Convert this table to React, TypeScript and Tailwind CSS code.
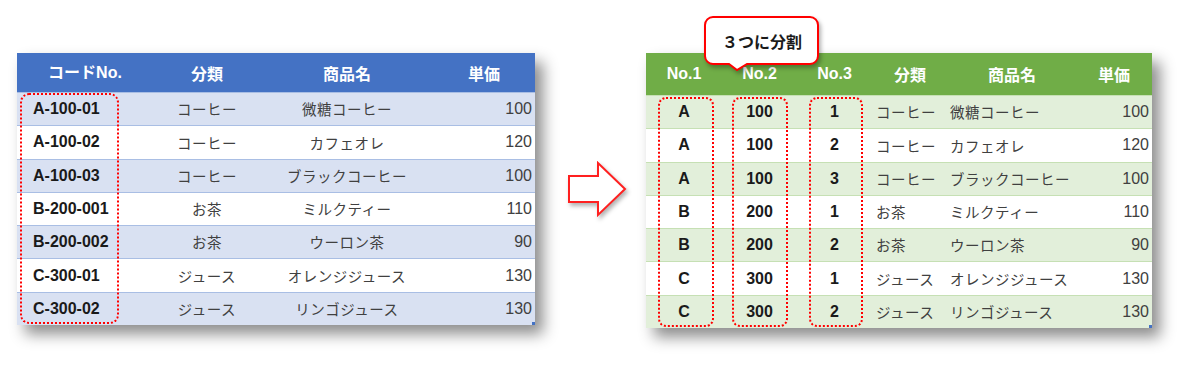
import React from 'react';

type Row = string[];

const leftRows: Row[] = [
  ['A-100-01', 'コーヒー', '微糖コーヒー', '100'],
  ['A-100-02', 'コーヒー', 'カフェオレ', '120'],
  ['A-100-03', 'コーヒー', 'ブラックコーヒー', '100'],
  ['B-200-001', 'お茶', 'ミルクティー', '110'],
  ['B-200-002', 'お茶', 'ウーロン茶', '90'],
  ['C-300-01', 'ジュース', 'オレンジジュース', '130'],
  ['C-300-02', 'ジュース', 'リンゴジュース', '130'],
];

const rightRows: Row[] = [
  ['A', '100', '1', 'コーヒー', '微糖コーヒー', '100'],
  ['A', '100', '2', 'コーヒー', 'カフェオレ', '120'],
  ['A', '100', '3', 'コーヒー', 'ブラックコーヒー', '100'],
  ['B', '200', '1', 'お茶', 'ミルクティー', '110'],
  ['B', '200', '2', 'お茶', 'ウーロン茶', '90'],
  ['C', '300', '1', 'ジュース', 'オレンジジュース', '130'],
  ['C', '300', '2', 'ジュース', 'リンゴジュース', '130'],
];

const font = "font-['Liberation_Sans','Noto_Sans_CJK_JP',sans-serif]";
const jp = "font-['Noto_Sans_CJK_JP',sans-serif]";

function LeftTable() {
  return (
    <div className="relative w-[518px] bg-white shadow-[8px_9px_14px_rgba(0,0,0,0.45)]">
      {/* header */}
      <div className="flex h-[39px] items-center bg-[#4472C4] text-[16px] font-bold text-white">
        <div className={`w-[136px] text-center ${font}`}>コードNo.</div>
        <div className={`w-[108px] text-center ${jp}`}>分類</div>
        <div className={`w-[172px] text-center ${jp}`}>商品名</div>
        <div className={`w-[102px] text-center ${jp}`}>単価</div>
      </div>
      {leftRows.map((r, i) => (
        <div
          key={i}
          className={`flex h-[33.3px] items-center border-t border-[#A9BEE4] ${i % 2 === 0 ? 'bg-[#D9E1F2]' : 'bg-white'}`}
        >
          <div className={`w-[136px] pl-4 text-[16px] font-bold text-[#1a1a1a] ${font}`}>{r[0]}</div>
          <div className={`w-[108px] text-center text-[14.5px] tracking-[0.5px] text-[#404040] ${jp}`}>{r[1]}</div>
          <div className={`w-[172px] text-center text-[14.5px] tracking-[0.5px] text-[#404040] ${jp}`}>{r[2]}</div>
          <div className={`w-[102px] pr-[3px] text-right text-[16px] text-[#404040] ${font}`}>{r[3]}</div>
        </div>
      ))}
      {/* highlight */}
      <div className="absolute left-[3px] top-[40px] h-[231px] w-[99px] rounded-[9px] border-[2.5px] border-dotted border-[#FF0000]" />
      <div className="absolute bottom-0 right-0 h-[3px] w-[3px] bg-[#4472C4]" />
    </div>
  );
}

function RightTable() {
  const widths = ['w-[76px]', 'w-[75px]', 'w-[75px]', 'w-[76px]', 'w-[128px]', 'w-[76px]'];
  return (
    <div className="relative w-[506px] bg-white shadow-[8px_9px_14px_rgba(0,0,0,0.45)]">
      <div className="flex h-[42px] items-center bg-[#70AD47] text-[16px] font-bold text-white">
        <div className={`${widths[0]} text-center ${font}`}>No.1</div>
        <div className={`${widths[1]} text-center ${font}`}>No.2</div>
        <div className={`${widths[2]} text-center ${font}`}>No.3</div>
        <div className={`${widths[3]} text-center ${jp}`}>分類</div>
        <div className={`${widths[4]} text-center ${jp}`}>商品名</div>
        <div className={`${widths[5]} text-center ${jp}`}>単価</div>
      </div>
      {rightRows.map((r, i) => (
        <div
          key={i}
          className={`flex h-[33.3px] items-center border-t border-[#C6E0B4] ${i % 2 === 0 ? 'bg-[#E2EFDA]' : 'bg-white'}`}
        >
          <div className={`${widths[0]} text-center text-[16px] font-bold text-[#1a1a1a] ${font}`}>{r[0]}</div>
          <div className={`${widths[1]} text-center text-[16px] font-bold text-[#1a1a1a] ${font}`}>{r[1]}</div>
          <div className={`${widths[2]} text-center text-[16px] font-bold text-[#1a1a1a] ${font}`}>{r[2]}</div>
          <div className={`${widths[3]} pl-[4px] text-[14.5px] tracking-[0.5px] text-[#404040] ${jp}`}>{r[3]}</div>
          <div className={`${widths[4]} pl-[2px] text-[14.5px] tracking-[0.5px] text-[#404040] ${jp}`}>{r[4]}</div>
          <div className={`${widths[5]} pr-[3px] text-right text-[16px] text-[#404040] ${font}`}>{r[5]}</div>
        </div>
      ))}
      <div className="absolute left-[12px] top-[44px] h-[230px] w-[56px] rounded-[8px] border-[2.5px] border-dotted border-[#FF0000]" />
      <div className="absolute left-[86px] top-[44px] h-[230px] w-[56px] rounded-[8px] border-[2.5px] border-dotted border-[#FF0000]" />
      <div className="absolute left-[163px] top-[44px] h-[230px] w-[54px] rounded-[8px] border-[2.5px] border-dotted border-[#FF0000]" />
      <div className="absolute bottom-0 right-0 h-[3px] w-[3px] bg-[#4472C4]" />

      {/* callout */}
      <div className="absolute left-[57px] top-[-38px] h-[58px] w-[118px]">
        <svg width="118" height="58" viewBox="0 0 118 58" className="absolute inset-0 drop-shadow-[2px_3px_2px_rgba(0,0,0,0.3)]">
          <path
            d="M10 2 H107 A8 8 0 0 1 115 10 V41 A8 8 0 0 1 107 49 H44 L34 55 L26 49 H10 A8 8 0 0 1 2 41 V10 A8 8 0 0 1 10 2 Z"
            fill="#ffffff"
            stroke="#FF0000"
            strokeWidth="2"
          />
        </svg>
        <div className={`relative flex h-[51px] items-center justify-center text-[16px] font-bold text-[#1a1a1a] ${jp}`}>
          ３つに分割
        </div>
      </div>
    </div>
  );
}

export default function App() {
  return (
    <div className="h-[382px] w-[1200px] bg-white">
      <div className="flex items-start pl-[17px] pt-[53px]">
        <LeftTable />
        <svg
          width="62"
          height="58"
          viewBox="0 0 62 58"
          className="ml-[32px] mt-[108px] drop-shadow-[2px_3px_2px_rgba(0,0,0,0.3)]"
        >
          <polygon
            points="2,15 31,15 31,2 58,28 31,54 31,41 2,41"
            fill="#ffffff"
            stroke="#FF2020"
            strokeWidth="2"
            strokeLinejoin="miter"
          />
        </svg>
        <div className="ml-[17px]">
          <RightTable />
        </div>
      </div>
    </div>
  );
}
